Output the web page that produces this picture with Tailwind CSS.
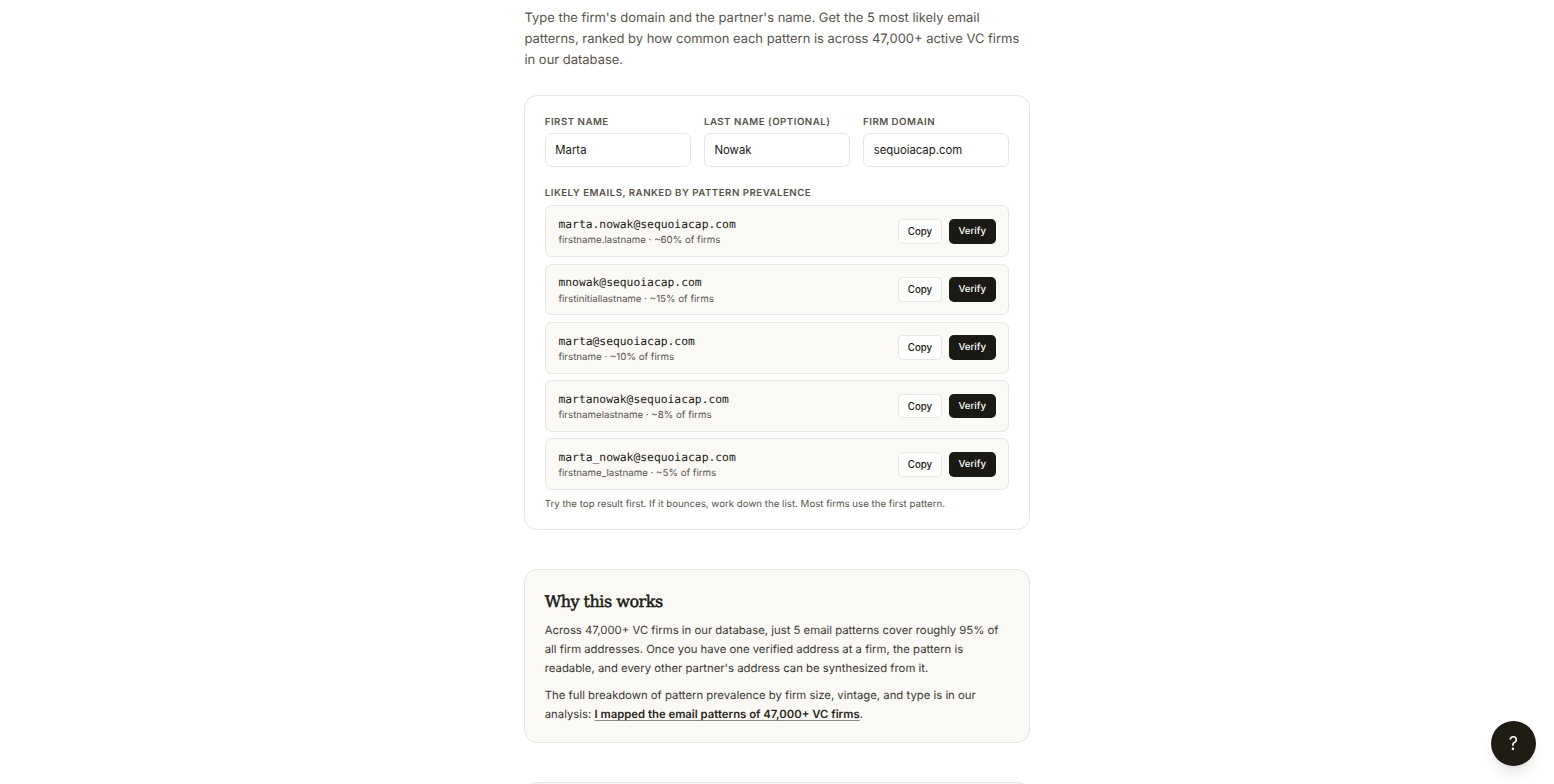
<!DOCTYPE html>
<html lang="en" class="text-[12.95px]">

<head>
    <meta charset="UTF-8">
    <meta name="viewport" content="width=device-width, initial-scale=1.0">
    <title>VC Email Finder</title>
    <script src="https://cdn.jsdelivr.net/npm/@tailwindcss/browser@4"></script>
</head>

<body class="bg-white font-['Inter',sans-serif] [text-rendering:geometricPrecision] text-[#1a1914] h-screen overflow-hidden">
    <main class="w-[505.2px] ml-[524.45px] pt-[8px]">
        <p class="text-[12.96px] leading-[21.05px] text-[#57534a] mb-[24.2px]">
            Type the firm's domain and the partner's name. Get the 5 most likely email patterns, ranked by how common each pattern is across 47,000+ active VC firms in our database.
        </p>

        <!-- Finder -->
        <div class="bg-white border border-[#e7e5e1] rounded-2xl px-[19.3px] pt-[20.2px] pb-[17.5px]">
            <div class="grid grid-cols-3 gap-4 mb-[21.2px]">
                <div>
                    <label class="block text-xs font-semibold uppercase tracking-wider text-[#57534a] mb-[3.6px]">First name</label>
                    <input type="text" value="Marta" class="block w-full border border-[#e7e5e1] rounded-lg px-[9.6px] h-[33.5px] text-sm">
                </div>
                <div>
                    <label class="block text-xs font-semibold uppercase tracking-wider text-[#57534a] mb-[3.6px]">Last name (optional)</label>
                    <input type="text" value="Nowak" class="block w-full border border-[#e7e5e1] rounded-lg px-[9.6px] h-[33.5px] text-sm">
                </div>
                <div>
                    <label class="block text-xs font-semibold uppercase tracking-wider text-[#57534a] mb-[3.6px]">Firm domain</label>
                    <input type="text" value="sequoiacap.com" class="block w-full border border-[#e7e5e1] rounded-lg px-[9.6px] h-[33.5px] text-sm">
                </div>
            </div>

            <p class="text-xs font-semibold uppercase tracking-wider text-[#57534a] mb-[4.7px]">Likely emails, ranked by pattern prevalence</p>
            <div class="flex flex-col gap-2">
                <div class="flex items-center justify-between bg-[#faf9f6] border border-[#e7e5e1] rounded-lg px-[12.7px] h-[51.8px]">
                    <div class="pt-[1.8px]">
                        <p class="font-['DejaVu_Sans_Mono',monospace] text-sm">marta.nowak@sequoiacap.com</p>
                        <p class="text-xs text-[#57534a] mt-[3.1px]">firstname.lastname · ~60% of firms</p>
                    </div>
                    <div class="flex gap-2 text-xs font-medium">
                        <button class="bg-white border border-[#e7e5e1] rounded-md px-[9.2px] pt-[5.8px] pb-[4px]">Copy</button>
                        <a class="bg-[#1a1914] text-white rounded-md px-[9.6px] pt-[7px] pb-1">Verify</a>
                    </div>
                </div>
                <div class="flex items-center justify-between bg-[#faf9f6] border border-[#e7e5e1] rounded-lg px-[12.7px] h-[51.8px]">
                    <div class="pt-[1.8px]">
                        <p class="font-['DejaVu_Sans_Mono',monospace] text-sm">mnowak@sequoiacap.com</p>
                        <p class="text-xs text-[#57534a] mt-[3.1px]">firstinitiallastname · ~15% of firms</p>
                    </div>
                    <div class="flex gap-2 text-xs font-medium">
                        <button class="bg-white border border-[#e7e5e1] rounded-md px-[9.2px] pt-[5.8px] pb-[4px]">Copy</button>
                        <a class="bg-[#1a1914] text-white rounded-md px-[9.6px] pt-[7px] pb-1">Verify</a>
                    </div>
                </div>
                <div class="flex items-center justify-between bg-[#faf9f6] border border-[#e7e5e1] rounded-lg px-[12.7px] h-[51.8px]">
                    <div class="pt-[1.8px]">
                        <p class="font-['DejaVu_Sans_Mono',monospace] text-sm">marta@sequoiacap.com</p>
                        <p class="text-xs text-[#57534a] mt-[3.1px]">firstname · ~10% of firms</p>
                    </div>
                    <div class="flex gap-2 text-xs font-medium">
                        <button class="bg-white border border-[#e7e5e1] rounded-md px-[9.2px] pt-[5.8px] pb-[4px]">Copy</button>
                        <a class="bg-[#1a1914] text-white rounded-md px-[9.6px] pt-[7px] pb-1">Verify</a>
                    </div>
                </div>
                <div class="flex items-center justify-between bg-[#faf9f6] border border-[#e7e5e1] rounded-lg px-[12.7px] h-[51.8px]">
                    <div class="pt-[1.8px]">
                        <p class="font-['DejaVu_Sans_Mono',monospace] text-sm">martanowak@sequoiacap.com</p>
                        <p class="text-xs text-[#57534a] mt-[3.1px]">firstnamelastname · ~8% of firms</p>
                    </div>
                    <div class="flex gap-2 text-xs font-medium">
                        <button class="bg-white border border-[#e7e5e1] rounded-md px-[9.2px] pt-[5.8px] pb-[4px]">Copy</button>
                        <a class="bg-[#1a1914] text-white rounded-md px-[9.6px] pt-[7px] pb-1">Verify</a>
                    </div>
                </div>
                <div class="flex items-center justify-between bg-[#faf9f6] border border-[#e7e5e1] rounded-lg px-[12.7px] h-[51.8px]">
                    <div class="pt-[1.8px]">
                        <p class="font-['DejaVu_Sans_Mono',monospace] text-sm">marta_nowak@sequoiacap.com</p>
                        <p class="text-xs text-[#57534a] mt-[3.1px]">firstname_lastname · ~5% of firms</p>
                    </div>
                    <div class="flex gap-2 text-xs font-medium">
                        <button class="bg-white border border-[#e7e5e1] rounded-md px-[9.2px] pt-[5.8px] pb-[4px]">Copy</button>
                        <a class="bg-[#1a1914] text-white rounded-md px-[9.6px] pt-[7px] pb-1">Verify</a>
                    </div>
                </div>
            </div>
            <p class="text-xs text-[#57534a] mt-[8.6px]">Try the top result first. If it bounces, work down the list. Most firms use the first pattern.</p>
        </div>

        <!-- Explanation -->
        <div class="bg-[#faf9f6] border border-[#e7e5e1] rounded-2xl px-[19.3px] pt-[20.6px] pb-[18.8px] mt-12">
            <h2 class="font-['DejaVu_Serif',serif] text-[16px] leading-[22.7px] tracking-[-0.5px] [-webkit-text-stroke:0.5px] mb-[7.2px]">Why this works</h2>
            <p class="text-sm leading-[19px] text-[#3a3831] mb-[8px]">
                Across 47,000+ VC firms in our database, just 5 email patterns cover roughly 95% of all firm addresses. Once you have one verified address at a firm, the pattern is readable, and every other partner's address can be synthesized from it.
            </p>
            <p class="text-sm leading-[19px] text-[#3a3831]">
                The full breakdown of pattern prevalence by firm size, vintage, and type is in our analysis: <a class="font-semibold underline decoration-[#8f8b82] underline-offset-[1.5px] [text-decoration-skip-ink:none] text-[#2a2820]">I mapped the email patterns of 47,000+ VC firms</a>.
            </p>
        </div>

        <div class="bg-[#faf9f6] border border-[#e7e5e1] rounded-2xl h-40 mt-12"></div>
    </main>

    <!-- Help button -->
    <button class="fixed right-[18px] bottom-[17.6px] size-[45.3px] rounded-full bg-[#1f1c14] text-white text-[18px] shadow-lg flex items-center justify-center">?</button>
</body>

</html>
